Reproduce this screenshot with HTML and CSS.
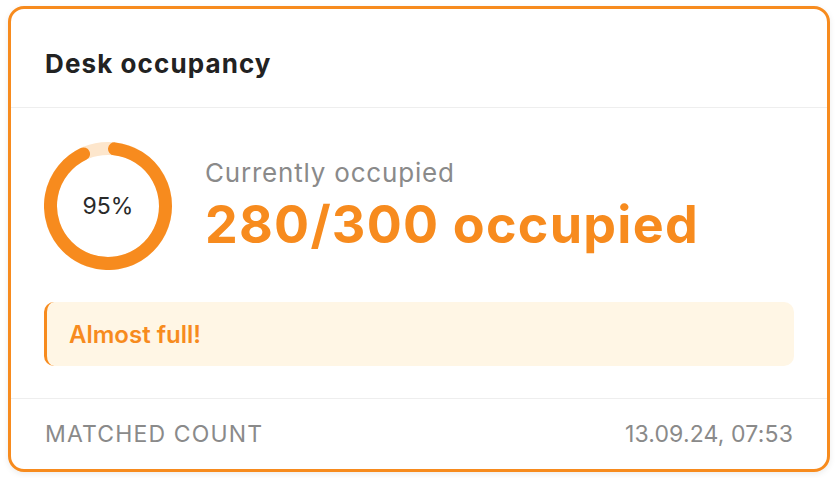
FILE: index.html
```html
<!DOCTYPE html>
<html lang="en">
<head>
<meta charset="utf-8">
<title>Desk occupancy</title>
<link rel="stylesheet" href="styles.css">
</head>
<body>
<div class="card">
  <div class="card-header">
    <h1 class="title">Desk occupancy</h1>
  </div>
  <div class="card-body">
    <div class="summary">
      <div class="donut">
        <svg class="donut-svg" width="128" height="128" viewBox="0 0 128 128">
          <circle class="donut-track" cx="64" cy="64" r="57.5"/>
          <path class="donut-fill" d="M70.51 6.87 A57.5 57.5 0 1 1 39.52 11.97"/>
        </svg>
        <span class="donut-label">95%</span>
      </div>
      <div class="stats">
        <div class="stats-label">Currently occupied</div>
        <div class="stats-value">280/300 occupied</div>
      </div>
    </div>
    <div class="alert">Almost full!</div>
  </div>
  <div class="card-footer">
    <span class="footer-label">MATCHED COUNT</span>
    <span class="footer-date">13.09.24, 07:53</span>
  </div>
</div>
</body>
</html>
```

FILE: styles.css
```css
html, body {
  margin: 0;
  padding: 0;
  background: #ffffff;
}
body {
  padding: 6px 8px;
  font-family: Inter, "Noto Sans", "Liberation Sans", sans-serif;
}
.card {
  box-sizing: border-box;
  width: 822px;
  height: 466px;
  border: 3px solid #f78b1e;
  border-radius: 16px;
  background: #fff;
  box-shadow: 0 2px 6px rgba(0, 0, 0, 0.08);
  display: flex;
  flex-direction: column;
}
.card-header {
  padding: 39px 34px 27px;
  border-bottom: 1px solid #eeeeee;
}
.title {
  margin: 0;
  font-size: 26px;
  line-height: 32px;
  font-weight: 700;
  letter-spacing: 1.1px;
  color: #222222;
}
.card-body {
  padding: 34px 33px 32px;
  display: flex;
  flex-direction: column;
  gap: 32px;
  border-bottom: 1px solid #eeeeee;
}
.summary {
  display: flex;
  align-items: center;
  gap: 33px;
}
.donut {
  position: relative;
  width: 128px;
  height: 128px;
  flex: none;
}
.donut-svg {
  display: block;
}
.donut-track {
  fill: none;
  stroke: #fde6cc;
  stroke-width: 13;
}
.donut-fill {
  fill: none;
  stroke: #f78b1e;
  stroke-width: 13;
  stroke-linecap: round;
}
.donut-label {
  position: absolute;
  inset: 0;
  display: flex;
  align-items: center;
  justify-content: center;
  font-size: 23px;
  color: #2a2a2a;
}
.stats {
  display: flex;
  flex-direction: column;
}
.stats-label {
  font-size: 26px;
  line-height: 30px;
  letter-spacing: 0.8px;
  color: #8a8a8a;
}
.stats-value {
  margin-top: 7px;
  font-size: 52px;
  line-height: 60px;
  font-weight: 700;
  letter-spacing: 1.25px;
  color: #f78b1e;
}
.alert {
  height: 64px;
  box-sizing: border-box;
  border-left: 3px solid #f78b1e;
  border-radius: 10px;
  background: #fff6e5;
  padding: 0 22px;
  display: flex;
  align-items: center;
  font-size: 24px;
  font-weight: 600;
  color: #f78b1e;
}
.card-footer {
  flex: 1;
  display: flex;
  align-items: center;
  justify-content: space-between;
  padding: 0 34px;
  font-size: 23px;
  color: #8a8a8a;
}
.footer-label {
  letter-spacing: 1.15px;
}
.footer-date {
  letter-spacing: 0.15px;
}
```
